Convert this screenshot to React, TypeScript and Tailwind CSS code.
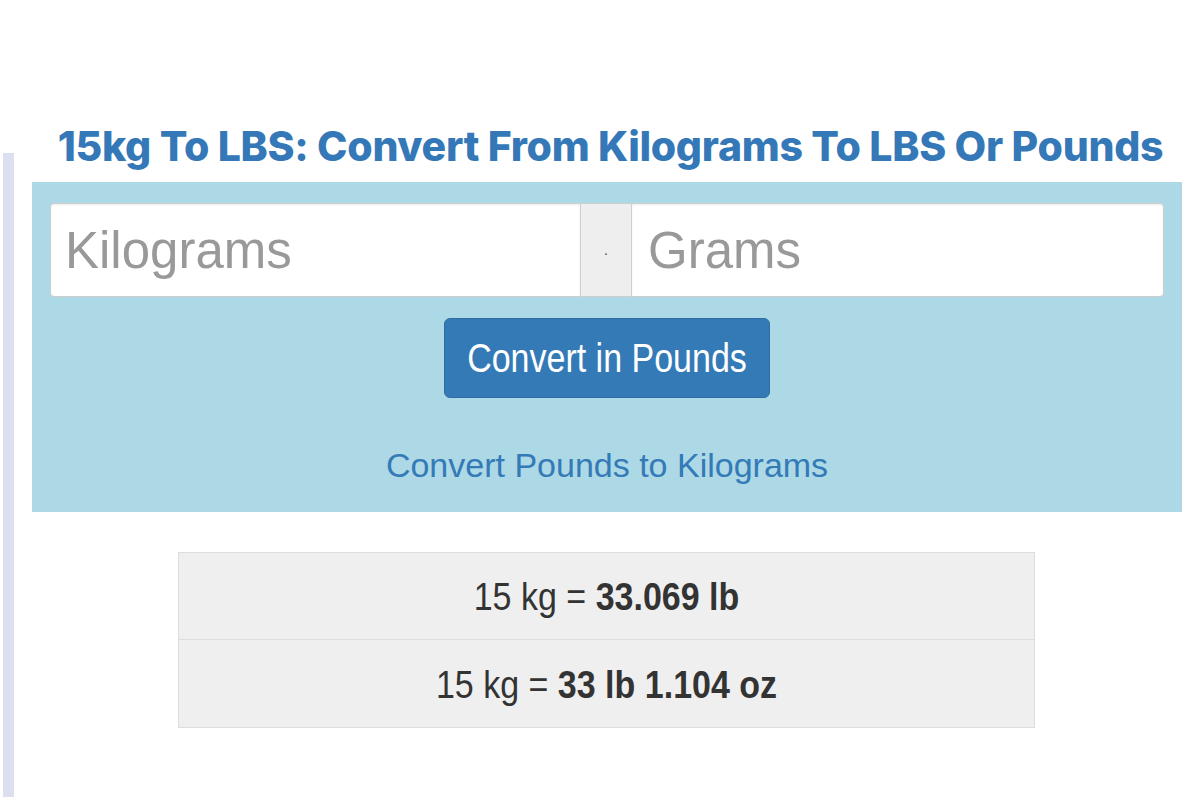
export default function App() {
  return (
    <div className="flex h-[800px] w-[1200px] bg-white font-['Liberation_Sans',Arial,sans-serif]">
      <div className="ml-[3px] mt-[153px] h-[644px] w-[11px] bg-[#dcdff0]" />

      <div className="ml-[18px] flex w-[1150px] flex-col">
        <h1 className="mt-[118px] h-[64px] whitespace-nowrap pl-[7px] text-center font-['Inter',sans-serif] text-[41px] font-extrabold leading-[56px] tracking-[-0.3px] text-[#3578b8]">
          15kg To LBS: Convert From Kilograms To LBS Or Pounds
        </h1>

        <div className="flex h-[330px] flex-col items-center bg-[#add8e6] px-[18px] pt-[21px]">
          <div className="flex h-[94px] w-full">
            <div className="flex flex-1 items-center rounded-l-[4px] border border-[#cfcfcf] bg-white pl-[14px] shadow-[inset_0_1px_2px_rgba(0,0,0,0.08)]">
              <span className="text-[51px] leading-none text-[#999]">Kilograms</span>
            </div>
            <div className="flex w-[50px] items-center justify-center border-y border-[#cfcfcf] bg-[#eee] text-[14px] text-[#444]">
              .
            </div>
            <div className="flex flex-1 items-center rounded-r-[4px] border border-[#cfcfcf] bg-white pl-[16px] shadow-[inset_0_1px_2px_rgba(0,0,0,0.08)]">
              <span className="text-[51px] leading-none text-[#999]">Grams</span>
            </div>
          </div>

          <button className="mt-[21px] flex h-[80px] w-[326px] items-center justify-center rounded-[6px] border border-[#2e6da4] bg-[#337ab7] text-white">
            <span className="inline-block scale-y-[1.17] text-[34px] leading-none">Convert in Pounds</span>
          </button>

          <a className="mt-[50px] inline-block text-[34px] leading-none text-[#337ab7]">
            Convert Pounds to Kilograms
          </a>
        </div>

        <div className="ml-[146px] mt-[40px] w-[857px] border border-[#ddd] bg-[#efefef] text-[#333]">
          <div className="flex h-[87px] items-center justify-center border-b border-[#ddd]">
            <span className="inline-block scale-y-[1.15] text-[34px] leading-none">
              15 kg = <b>33.069 lb</b>
            </span>
          </div>
          <div className="flex h-[87px] items-center justify-center">
            <span className="inline-block scale-y-[1.15] text-[34px] leading-none">
              15 kg = <b>33 lb 1.104 oz</b>
            </span>
          </div>
        </div>
      </div>
    </div>
  );
}
